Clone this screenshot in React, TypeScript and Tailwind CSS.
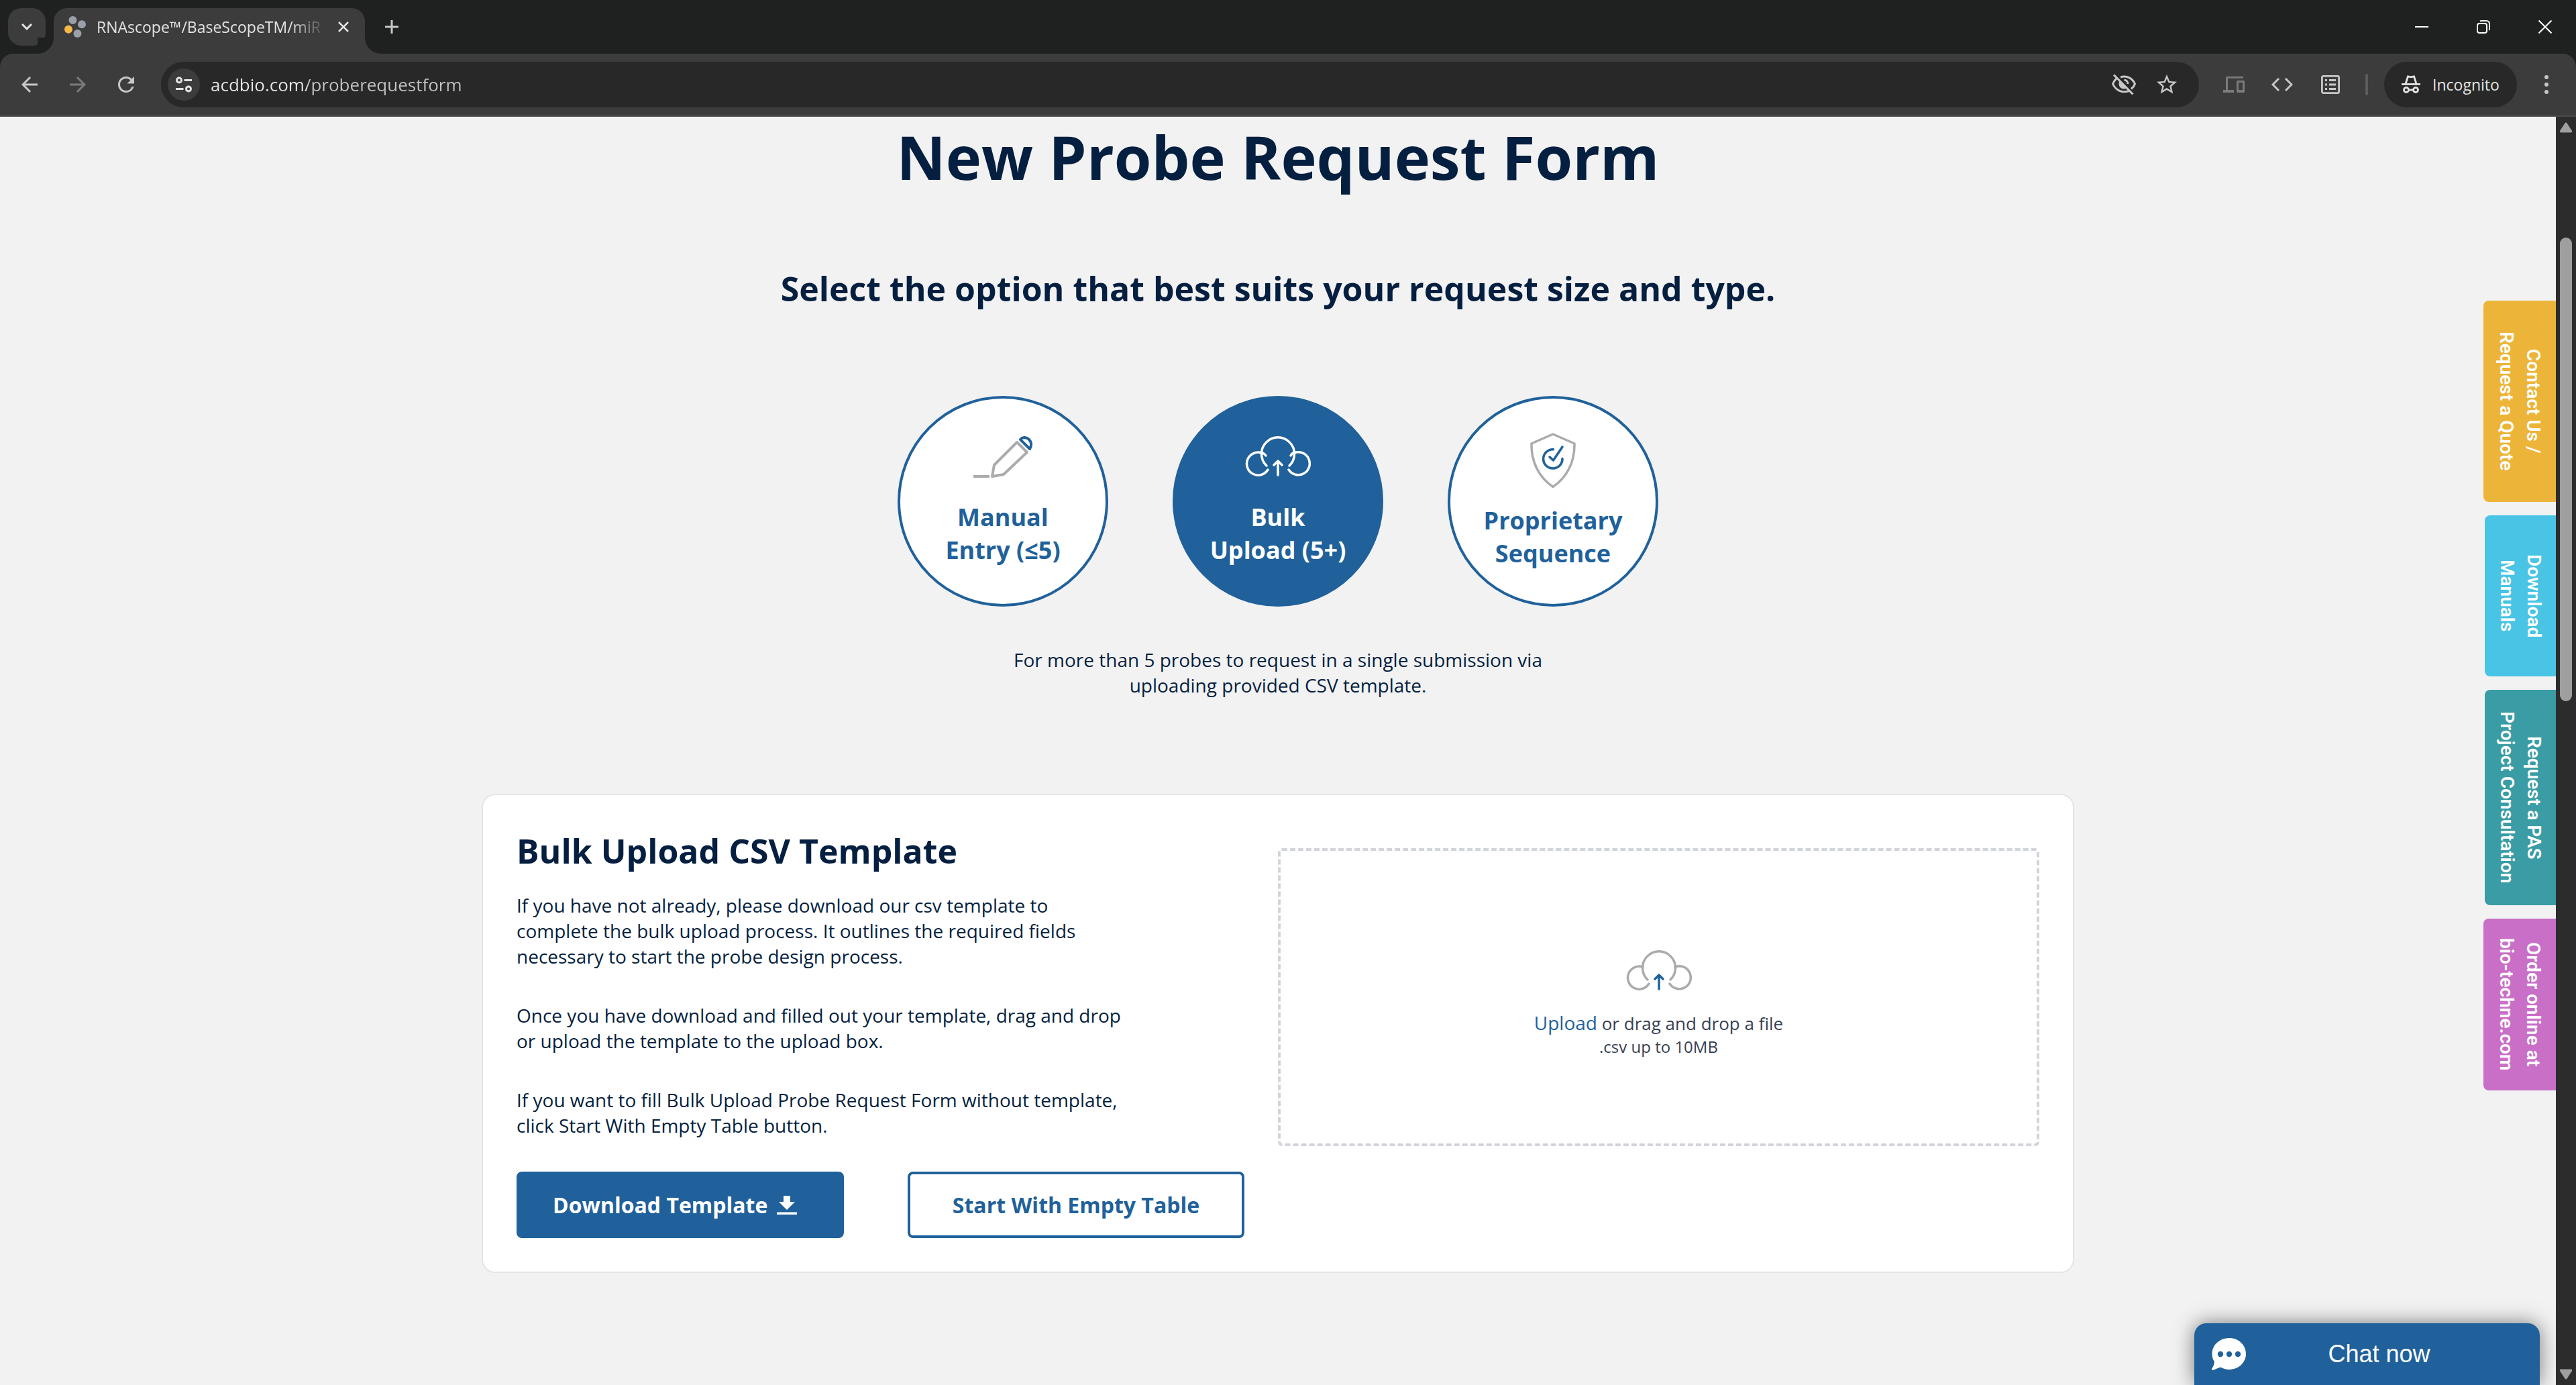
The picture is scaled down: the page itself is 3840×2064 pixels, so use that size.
import type { ReactNode } from 'react';
import { MdArrowBack, MdArrowForward, MdRefresh, MdStarOutline } from 'react-icons/md';

function Favicon() {
  return (
    <svg viewBox="0 0 32 32" className="h-8 w-8 shrink-0" aria-hidden="true">
      <circle cx="12.5" cy="6" r="6" fill="#9aa0a8" />
      <circle cx="26" cy="12.3" r="6" fill="#9aa0a8" />
      <circle cx="6" cy="19.7" r="6" fill="#f8b84a" />
      <circle cx="19.5" cy="26" r="6" fill="#9aa0a8" />
    </svg>
  );
}

function TabStrip() {
  return (
    <div className="flex h-20 items-end bg-[#1f2120] text-[#e3e3e3]">
      <button type="button" aria-label="Search tabs" className="mb-3 ml-3 flex h-14 w-14 items-center justify-center rounded-[20px] bg-[#3c3c3c]">
        <svg viewBox="0 0 16 10" className="h-[10px] w-4" fill="none" stroke="currentColor" strokeWidth="3">
          <path d="M1 1l7 7 7-7" />
        </svg>
      </button>
      <div className="relative ml-3 flex h-[68px] w-[464px] items-center rounded-t-[20px] bg-[#3c3c3c] pb-3 pl-4 pr-3">
        <span className="absolute bottom-0 right-full h-6 w-6 bg-[#3c3c3c]">
          <span className="block h-full w-full rounded-br-[24px] bg-[#1f2120]" />
        </span>
        <span className="absolute bottom-0 left-full h-6 w-6 bg-[#3c3c3c]">
          <span className="block h-full w-full rounded-bl-[24px] bg-[#1f2120]" />
        </span>
        <Favicon />
        <span className="ml-4 w-[336px] whitespace-nowrap text-[23px] leading-8 [mask-image:linear-gradient(to_right,black_86%,transparent_102%)]">
          RNAscope™/BaseScopeTM/miR
        </span>
        <button type="button" aria-label="Close tab" className="ml-4 flex h-8 w-8 items-center justify-center">
          <svg viewBox="0 0 16 16" className="h-4 w-4" fill="none" stroke="currentColor" strokeWidth="2.6">
            <path d="M1 1l14 14M15 1L1 15" />
          </svg>
        </button>
      </div>
      <button type="button" aria-label="New tab" className="mb-3 ml-3 flex h-14 w-14 items-center justify-center">
        <svg viewBox="0 0 20 20" className="h-5 w-5" fill="none" stroke="#c7c7c7" strokeWidth="3">
          <path d="M10 0v20M0 10h20" />
        </svg>
      </button>
      <div className="ml-auto flex h-full text-white">
        <button type="button" aria-label="Minimize" className="flex w-[92px] items-center justify-center">
          <svg viewBox="0 0 20 20" className="h-5 w-5" fill="none" stroke="currentColor" strokeWidth="2">
            <path d="M0 10h20" />
          </svg>
        </button>
        <button type="button" aria-label="Restore" className="flex w-[92px] items-center justify-center">
          <svg viewBox="0 0 20 20" className="h-5 w-5" fill="none" stroke="currentColor" strokeWidth="2">
            <rect x="1" y="5" width="14" height="14" rx="3" />
            <path d="M5 1.5Q6 1 7 1h7.5A4.500 4.500 0 0 1 19 5.500V13q0 1-.5 2" />
          </svg>
        </button>
        <button type="button" aria-label="Close" className="flex w-[92px] items-center justify-center">
          <svg viewBox="0 0 20 20" className="h-5 w-5" fill="none" stroke="currentColor" strokeWidth="2">
            <path d="M.5.5l19 19M19.500.5l-19 19" />
          </svg>
        </button>
      </div>
    </div>
  );
}

function ToolButton({ label, children }: { label: string; children: ReactNode }) {
  return (
    <button type="button" aria-label={label} className="flex h-[68px] w-[72px] shrink-0 items-center justify-center">
      {children}
    </button>
  );
}

function Toolbar() {
  return (
    <div className="bg-[#1f2120]">
      <div className="flex h-[94px] items-center rounded-t-[20px] border-b-2 border-[#4b4b4b] bg-[#3c3c3c] px-2 text-[#c7c7c7]">
        <ToolButton label="Back">
          <MdArrowBack size={36} />
        </ToolButton>
        <div className="text-[#7b7b7b]">
          <ToolButton label="Forward">
            <MdArrowForward size={36} />
          </ToolButton>
        </div>
        <ToolButton label="Reload">
          <MdRefresh size={36} />
        </ToolButton>
        <div className="ml-4 flex h-[68px] flex-1 items-center rounded-full bg-[#282828] pl-[10px] pr-4">
          <button type="button" aria-label="View site information" className="flex h-12 w-12 items-center justify-center rounded-full bg-[#3c3c3c]">
            <svg viewBox="0 0 24 24" className="h-6 w-6" fill="none" stroke="#e3e3e3" strokeWidth="3">
              <circle cx="5" cy="5.500" r="3.500" />
              <path d="M12.500 5.500H24M0 18.500h11.500" />
              <circle cx="19" cy="18.500" r="3.500" />
            </svg>
          </button>
          <input
            type="text"
            aria-label="Address"
            defaultValue="acdbio.com/proberequestform"
            className="ml-4 h-12 flex-1 bg-[linear-gradient(to_right,#e8e8e8_144px,#c3c3c3_144px)] bg-clip-text text-[26px] text-transparent outline-none"
          />
          <button type="button" aria-label="Third-party cookies blocked" className="flex w-16 justify-center">
            <svg viewBox="0 0 36 30" className="h-[30px] w-9" fill="none" stroke="currentColor" strokeWidth="3">
              <path d="M13 4C23 1 31 6 34.500 14c-1 3-3 5.500-5.500 7.500" />
              <path d="M7 6C4.500 8 3 10.500 1.500 14 6 24 16 28 25.500 24.500" />
              <path d="M18.500 8A6 6 0 0 1 24 14" />
              <path d="M11.500 9.500C8.500 15.500 12.500 22 18.500 21.500c2 0 3.500-.5 4.500-1.200z" fill="currentColor" stroke="none" />
              <path d="M3 .5l28.500 29" />
            </svg>
          </button>
          <button type="button" aria-label="Bookmark this page" className="flex w-16 justify-center">
            <MdStarOutline size={36} />
          </button>
        </div>
        <div className="ml-4 text-[#7b7b7b]">
          <ToolButton label="Devices">
            <svg viewBox="0 0 32 24" className="h-6 w-8" fill="currentColor">
              <path d="M6.500 0H30v2.800H7V20h9v4H0v-4h4V2.500Q4 0 6.500 0z" />
              <path fillRule="evenodd" d="M21.500 6h9A1.500 1.500 0 0 1 32 7.500v15a1.500 1.500 0 0 1-1.500 1.500h-9a1.500 1.500 0 0 1-1.500-1.500v-15A1.500 1.500 0 0 1 21.500 6zM23 9v11h6V9z" />
            </svg>
          </ToolButton>
        </div>
        <ToolButton label="Source">
          <svg viewBox="0 0 32 20" className="h-5 w-8" fill="none" stroke="currentColor" strokeWidth="3">
            <path d="M11 1l-9 9 9 9M21 1l9 9-9 9" />
          </svg>
        </ToolButton>
        <ToolButton label="Reading list">
          <svg viewBox="0 0 28 28" className="h-7 w-7" fill="none" stroke="currentColor" strokeWidth="2.800">
            <rect x="1.400" y="1.400" width="25.200" height="25.200" rx="2" />
            <path d="M12 7.500h10M12 14h10M12 20.500h10M6 7.500h3M6 14h3M6 20.500h3" />
          </svg>
        </ToolButton>
        <span className="ml-4 h-8 w-1 rounded-full bg-[#5c5c5c]" />
        <button type="button" className="ml-6 mr-2 flex h-[68px] w-[198px] items-center justify-center gap-[18px] rounded-full bg-[#282828] text-[23px] text-[#e3e3e3]">
          <svg viewBox="0 0 28 28" className="h-7 w-7" fill="none" stroke="currentColor" strokeWidth="2.800">
            <path d="M6 13L9.500 1.800l4.500 1 4.500-1L22 13" />
            <path d="M0 13.500h28" />
            <circle cx="7" cy="22" r="3.500" />
            <circle cx="21" cy="22" r="3.500" />
            <path d="M10.500 22h7" />
          </svg>
          Incognito
        </button>
        <ToolButton label="Menu">
          <svg viewBox="0 0 6 28" className="h-7 w-[6px]" fill="currentColor">
            <circle cx="3" cy="3" r="3" />
            <circle cx="3" cy="14" r="3" />
            <circle cx="3" cy="25" r="3" />
          </svg>
        </ToolButton>
      </div>
    </div>
  );
}

function PencilIcon() {
  return (
    <svg viewBox="0 0 88 72" className="h-[72px] w-[88px]" fill="none" strokeWidth="4" strokeLinejoin="round" aria-hidden="true">
      <path d="M65 9L31 43l-3 17 17-3 35-33z" stroke="#a9abad" />
      <path d="M0 60h24" stroke="#a9abad" />
      <path d="M70 5l14 14c3-5 3-10-1-14-3.500-3.500-9-4.500-13 0z" stroke="#20619b" />
    </svg>
  );
}

function ShieldIcon() {
  return (
    <svg viewBox="0 0 68 82" className="h-[82px] w-[68px]" fill="none" strokeWidth="3.500" strokeLinejoin="round" strokeLinecap="round" aria-hidden="true">
      <path d="M34 2l32 14c.5 29-12 51-32 64.500C14 67 1.500 45 2 16z" stroke="#a9abad" />
      <path d="M34.500 24.700A14.200 14.200 0 1 0 48 38.500M29 36l5.500 5L48 21" stroke="#20619b" />
    </svg>
  );
}

function CloudLines() {
  return (
    <>
      <path d="M32 44A24.500 24.500 0 1 1 66 44" />
      <path d="M25 25A17 17 0 1 0 34 50" />
      <path d="M73 25A17 17 0 1 1 65 50" />
    </>
  );
}

function CloudIcon() {
  return (
    <svg viewBox="0 0 98 72" className="h-[72px] w-[98px]" fill="none" stroke="white" strokeWidth="3.500" strokeLinecap="round" strokeLinejoin="round" aria-hidden="true">
      <CloudLines />
      <path d="M31 29q-3-4-6-4M68 29q2-4 5-4M49 58V37M43 43l6-6 6 6" />
    </svg>
  );
}

function UploadIcon() {
  return (
    <svg viewBox="0 -18 98 96" className="h-24 w-[98px]" fill="none" stroke="#a9abad" strokeWidth="3.500" strokeLinecap="round" strokeLinejoin="round" aria-hidden="true">
      <CloudLines />
      <path d="M49 58V37M43 43l6-6 6 6" stroke="#20619b" />
    </svg>
  );
}

function OptionCircle({ icon, lines, selected = false }: { icon: ReactNode; lines: [string, string]; selected?: boolean }) {
  return (
    <button
      type="button"
      aria-pressed={selected}
      className={`flex h-[314px] w-[314px] flex-col items-center justify-center gap-6 rounded-full border-4 border-[#20619b] text-4xl leading-[49px] font-bold ${
        selected ? 'bg-[#20619b] text-white' : 'bg-white text-[#20619b]'
      }`}
    >
      {icon}
      <span>
        {lines[0]}
        <br />
        {lines[1]}
      </span>
    </button>
  );
}

function TemplateCard() {
  return (
    <section className="mt-[143px] grid w-full max-w-[2374px] grid-cols-2 rounded-[20px] border-2 border-[#e4e5e7] bg-white px-[50px] pt-[53px] pb-[50px]">
      <div>
        <h3 className="text-[50px] leading-[60px] font-bold">Bulk Upload CSV Template</h3>
        <div className="mt-8 flex w-4/5 flex-col gap-[50px] text-[28px] leading-[38px]">
          <p>
            If you have not already, please download our csv template to complete the bulk upload process. It outlines the required fields
            necessary to start the probe design process.
          </p>
          <p>Once you have download and filled out your template, drag and drop or upload the template to the upload box.</p>
          <p>If you want to fill Bulk Upload Probe Request Form without template, click Start With Empty Table button.</p>
        </div>
        <div className="mt-[50px] flex gap-[95px] text-[32px] leading-[43px] font-bold">
          <button type="button" className="flex w-[488px] items-center gap-[14px] rounded-lg border-4 border-[#20619b] bg-[#20619b] py-6 pl-[50px] text-white">
            Download Template
            <svg viewBox="0 0 30 28" className="h-7 w-[30px]" fill="currentColor" aria-hidden="true">
              <path d="M10 0h10v9h7L15 21 3 9h7zM0 24.500h30V28H0z" />
            </svg>
          </button>
          <button type="button" className="w-[502px] rounded-lg border-4 border-[#20619b] bg-white py-6 text-[#20619b]">
            Start With Empty Table
          </button>
        </div>
      </div>
      <div className="mt-[26px] flex h-[444px] flex-col items-center justify-center rounded-md border-4 border-dashed border-[#d1d5db] pt-[2px] text-[#374151]">
        <UploadIcon />
        <label className="mt-[11px] cursor-pointer text-[26px] leading-[38px]">
          <span className="text-[28px] text-[#20619b]">Upload</span> or drag and drop a file
          <input type="file" accept=".csv" className="sr-only" />
        </label>
        <p className="text-2xl leading-8">.csv up to 10MB</p>
      </div>
    </section>
  );
}

function SideTabs() {
  const base = "flex items-center justify-center rounded-l-lg text-center [writing-mode:vertical-rl] font-['Roboto'] text-[28px] leading-10 font-semibold text-white";
  return (
    <nav aria-label="Quick links" className="absolute top-[274px] right-0 flex flex-col items-end gap-5">
      <a href="#contact" className={`${base} h-[300px] w-[108px] bg-[#ecb539]`}>
        <span>
          Contact Us /<br />
          Request a Quote
        </span>
      </a>
      <a href="#manuals" className={`${base} h-60 w-[106px] bg-[#49c4e5]`}>
        <span>
          Download
          <br />
          Manuals
        </span>
      </a>
      <a href="#consultation" className={`${base} h-[321px] w-[106px] bg-[#3a9ca4]`}>
        <span>
          Request a PAS
          <br />
          Project Consultation
        </span>
      </a>
      <a href="#order" className={`${base} h-64 w-[108px] bg-[#c96fc7]`}>
        <span>
          Order online at
          <br />
          bio-techne.com
        </span>
      </a>
    </nav>
  );
}

function ChatButton() {
  return (
    <button
      type="button"
      className="absolute right-6 bottom-0 flex h-[92px] w-[515px] items-center rounded-t-[18px] bg-[#20619b] pl-[26px] font-['Liberation_Sans',sans-serif] text-4xl text-white shadow-[0_0_30px_rgba(0,0,0,0.5)]"
    >
      <svg viewBox="0 0 51 48" className="h-12 w-[51px]" aria-hidden="true">
        <path fill="white" d="M26 0C40 0 51 10.500 51 23.500S40 47 26 47c-5 0-9-1.200-12.500-3.500C10 44 5 47.500 1.500 47.500c-2 0-2-1.500-1-2.500C2.500 42.500 3.500 39 4 35.500 1.500 32 .5 28 .5 23.500.5 10.500 12 0 26 0z" />
        <circle cx="13" cy="24" r="4.200" fill="#20619b" />
        <circle cx="26" cy="24" r="4.200" fill="#20619b" />
        <circle cx="39" cy="24" r="4.200" fill="#20619b" />
      </svg>
      <span className="ml-[42px] mr-[83px] flex-1 text-center">Chat now</span>
    </button>
  );
}

function Scrollbar() {
  return (
    <div className="relative flex w-[30px] shrink-0 flex-col items-center bg-[#2c2c2c] pt-2 pb-2">
      <svg viewBox="0 0 20 16" className="h-4 w-5" fill="#9f9f9f" aria-hidden="true">
        <path d="M8.500 1.500q1.500-2 3 0L19 13q.8 2.500-1.500 2.500h-15Q.2 15.500 1 13z" />
      </svg>
      <div className="mt-[156px] h-[691px] w-[18px] rounded-full bg-[#9f9f9f]" />
      <svg viewBox="0 0 20 16" className="mt-auto h-4 w-5" fill="#9f9f9f" aria-hidden="true">
        <path d="M8.500 14.500q1.500 2 3 0L19 3q.8-2.500-1.500-2.500h-15Q.2.5 1 3z" />
      </svg>
    </div>
  );
}

export default function App() {
  return (
    <div className="flex h-screen flex-col overflow-hidden font-['Open_Sans',sans-serif]">
      <header>
        <TabStrip />
        <Toolbar />
      </header>
      <div className="flex min-h-0 flex-1">
        <main className="relative flex flex-1 flex-col items-center bg-[#f2f2f2] text-[#051f40]">
          <h1 className="text-[90px] leading-[118px] font-bold">New Probe Request Form</h1>
          <h2 className="mt-[108px] text-[50px] leading-[60px] font-bold">Select the option that best suits your request size and type.</h2>
          <div className="mt-[130px] flex gap-24">
            <OptionCircle icon={<PencilIcon />} lines={['Manual', 'Entry (≤5)']} />
            <OptionCircle icon={<CloudIcon />} lines={['Bulk', 'Upload (5+)']} selected />
            <OptionCircle icon={<ShieldIcon />} lines={['Proprietary', 'Sequence']} />
          </div>
          <p className="mt-[60px] w-[820px] text-center text-[28px] leading-[38px]">
            For more than 5 probes to request in a single submission via uploading provided CSV template.
          </p>
          <TemplateCard />
          <SideTabs />
          <ChatButton />
        </main>
        <Scrollbar />
      </div>
    </div>
  );
}
